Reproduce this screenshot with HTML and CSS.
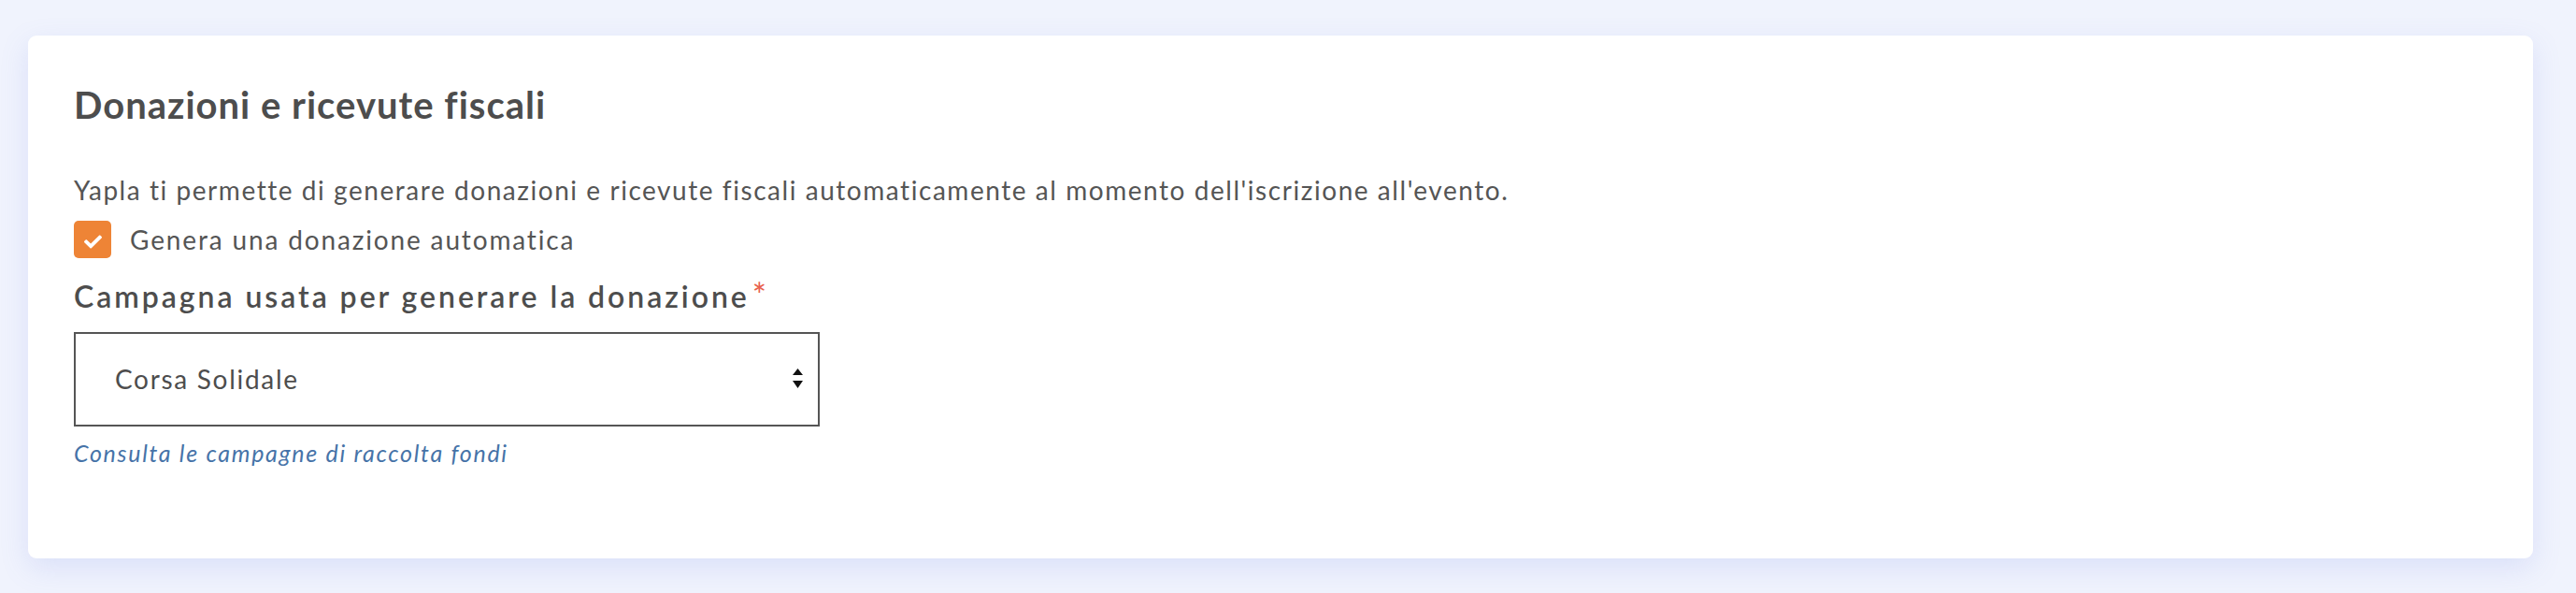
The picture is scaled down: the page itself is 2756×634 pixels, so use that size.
FILE: index.html
```html
<!DOCTYPE html>
<html lang="it">
<head>
<meta charset="utf-8">
<title>Donazioni e ricevute fiscali</title>
<link rel="stylesheet" href="styles.css">
</head>
<body>
<div class="page">
  <section class="card">
    <h2 class="card-title">Donazioni e ricevute fiscali</h2>
    <p class="intro">Yapla ti permette di generare donazioni e ricevute fiscali automaticamente al momento dell'iscrizione all'evento.</p>
    <label class="check-row">
      <span class="checkbox">
        <svg class="check-icon" viewBox="0 60 512 392" width="19" height="15" aria-hidden="true"><path d="M173.9 439.4l-166.4-166.4c-10-10-10-26.2 0-36.2l36.2-36.2c10-10 26.2-10 36.2 0L192 312.7 432.1 72.6c10-10 26.2-10 36.2 0l36.2 36.2c10 10 10 26.2 0 36.2l-294.4 294.4c-10 10-26.2 10-36.2 0z" fill="#fff"/></svg>
      </span>
      <span class="check-text">Genera una donazione automatica</span>
    </label>
    <div class="field-label">Campagna usata per generare la donazione<span class="req">*</span></div>
    <div class="select">
      <span class="select-value">Corsa Solidale</span>
      <svg class="select-arrows" viewBox="0 0 11 22" width="11" height="22" aria-hidden="true"><path d="M5.5 0 L11 7 L0 7 Z M0 13 L11 13 L5.5 21 Z" fill="#111"/></svg>
    </div>
    <a class="help-link" href="#">Consulta le campagne di raccolta fondi</a>
  </section>
</div>
</body>
</html>
```

FILE: styles.css
```css
html, body {
  margin: 0;
  padding: 0;
}
body {
  background: #f0f3fd;
  font-family: "Lato", "Open Sans", sans-serif;
  color: #555555;
}
.page {
  padding: 38px 46px 37px 30px;
}
.card {
  background: #ffffff;
  border-radius: 9px;
  box-shadow: 0 10px 30px rgba(110, 130, 225, 0.17);
  padding: 50px 48px 0 49px;
  height: 559px;
  box-sizing: border-box;
  display: flex;
  flex-direction: column;
  align-items: flex-start;
}
.card-title {
  margin: 0;
  font-size: 40px;
  line-height: 48px;
  font-weight: 700;
  letter-spacing: 1px;
  color: #4d4d4d;
}
.intro {
  margin: 47px 0 0;
  font-size: 28px;
  line-height: 40px;
  letter-spacing: 1.55px;
}
.check-row {
  margin-top: 13px;
  display: flex;
  align-items: center;
  gap: 20px;
  font-size: 28px;
  line-height: 40px;
  letter-spacing: 1.85px;
}
.checkbox {
  width: 40px;
  height: 40px;
  border-radius: 5px;
  background: #ee8436;
  display: flex;
  align-items: center;
  justify-content: center;
  padding-top: 4px;
  box-sizing: border-box;
}
.check-icon {
  display: block;
}
.field-label {
  margin-top: 19px;
  font-size: 32px;
  line-height: 40px;
  font-weight: 600;
  letter-spacing: 2.95px;
  color: #4d4d4d;
}
.req {
  color: #e8604c;
  font-weight: 400;
  font-size: 36px;
  letter-spacing: 0;
  margin-left: 3px;
}
.select {
  margin-top: 18px;
  width: 798px;
  height: 101px;
  box-sizing: border-box;
  border: 2px solid #555555;
  display: flex;
  align-items: center;
  justify-content: space-between;
  padding: 0 16px 2px 42px;
  font-size: 28px;
  letter-spacing: 1.7px;
  color: #4d4d4d;
}
.help-link {
  margin-top: 11px;
  font-size: 25px;
  line-height: 34px;
  font-style: italic;
  letter-spacing: 1.7px;
  color: #4673a8;
  text-decoration: none;
}
```
